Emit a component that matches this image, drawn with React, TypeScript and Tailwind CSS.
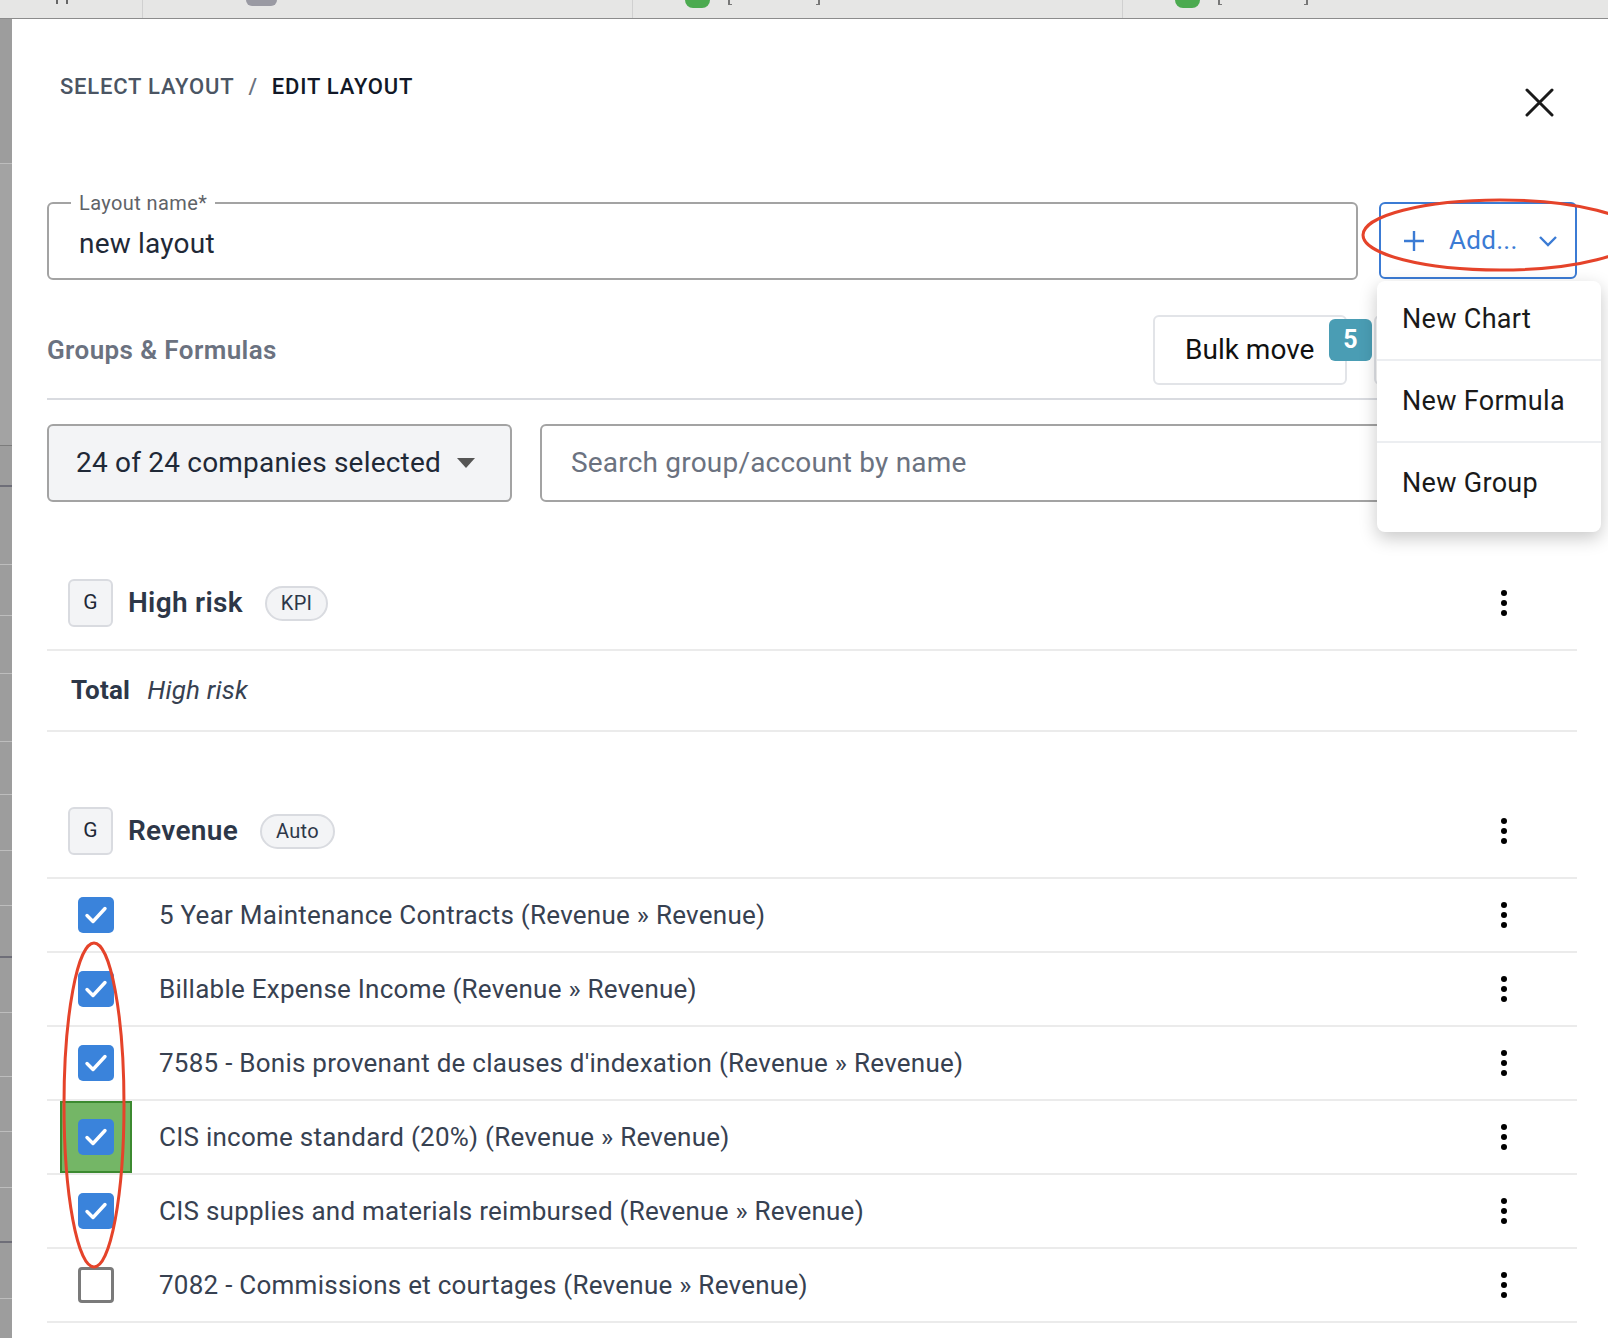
import React from "react"

const rows = [
  { label: "5 Year Maintenance Contracts (Revenue » Revenue)", checked: true },
  { label: "Billable Expense Income (Revenue » Revenue)", checked: true },
  { label: "7585 - Bonis provenant de clauses d'indexation (Revenue » Revenue)", checked: true },
  { label: "CIS income standard (20%) (Revenue » Revenue)", checked: true, highlight: true },
  { label: "CIS supplies and materials reimbursed (Revenue » Revenue)", checked: true },
  { label: "7082 - Commissions et courtages (Revenue » Revenue)", checked: false },
]

// left strip of the window behind the modal
const stripBands = [145, 282, 41, 78, 51, 58, 68, 53, 56, 55, 52, 55, 64, 55, 56, 55, 56]

const Kebab = () => (
  <div className="flex flex-col items-center gap-[4px]">
    <span className="w-[6px] h-[6px] rounded-full bg-black" />
    <span className="w-[6px] h-[6px] rounded-full bg-black" />
    <span className="w-[6px] h-[6px] rounded-full bg-black" />
  </div>
)

const Checkbox = ({ checked }: { checked: boolean }) =>
  checked ? (
    <div className="w-[36px] h-[36px] rounded-[5px] bg-[#3a83db] flex items-center justify-center">
      <svg width="26" height="26" viewBox="0 0 26 26" fill="none">
        <path d="M4 13.5 L10 19.5 L22 6.5" stroke="white" strokeWidth="3.4" strokeLinecap="round" strokeLinejoin="round" />
      </svg>
    </div>
  ) : (
    <div className="w-[36px] h-[36px] rounded-[4px] border-[3px] border-[#7a7a7a] bg-white" />
  )

const GroupHeader = ({ name, tag }: { name: string; tag: string }) => (
  <div className="flex items-center justify-between pb-[22px] border-b-2 border-[#ebebeb]">
    <div className="flex items-center">
      <div className="ml-[21px] w-[45px] h-[48px] rounded-[6px] border-2 border-[#d9dbe0] bg-[#f3f4f6] flex items-center justify-center text-[21px] text-[#1f2937]">
        G
      </div>
      <span className="ml-[15px] text-[28px] font-semibold tracking-[0.3px] text-[#2d3748] leading-none">{name}</span>
      <span className="ml-[22px] px-[14px] h-[35px] rounded-full border-2 border-[#d9dbe0] bg-[#f3f4f6] flex items-center text-[20px] tracking-[0.3px] text-[#2d3748]">
        {tag}
      </span>
    </div>
    <div className="mr-[70px]">
      <Kebab />
    </div>
  </div>
)

export default function App() {
  return (
    <div className="relative w-[1608px] h-[1338px] overflow-hidden bg-white font-['Roboto',sans-serif]">
      {/* top tab strip of the page behind */}
      <div className="h-[19px] bg-[#e6e6e5] border-b border-[#8c8c8c] flex items-start relative">
        <div className="w-[143px] h-full border-r border-[#d0d0d0] flex gap-[8px] pl-[56px]">
          <span className="w-[2px] h-[4px] bg-[#666]" />
          <span className="w-[2px] h-[4px] bg-[#666]" />
        </div>
        <div className="w-[490px] h-full border-r border-[#d0d0d0] pl-[103px]">
          <div className="w-[31px] h-[6px] rounded-b-[6px] bg-[#9a9aa3]" />
        </div>
        <div className="w-[490px] h-full border-r border-[#d0d0d0] pl-[52px] flex items-start">
          <div className="w-[25px] h-[8px] rounded-b-full bg-[#4caa50]" />
          <span className="ml-[18px] w-[4px] h-[5px] border-l-2 border-b border-[#777]" />
          <span className="ml-[84px] w-[4px] h-[5px] border-r-2 border-b border-[#777]" />
        </div>
        <div className="flex-1 h-full pl-[52px] flex items-start">
          <div className="w-[25px] h-[8px] rounded-b-full bg-[#4caa50]" />
          <span className="ml-[18px] w-[4px] h-[5px] border-l-2 border-b border-[#777]" />
          <span className="ml-[82px] w-[4px] h-[5px] border-r-2 border-b border-[#777]" />
        </div>
      </div>

      <div className="flex">
        <div className="w-[12px] h-[1319px] bg-[#9d9d9d] flex flex-col">
          {stripBands.map((h, i) => (
            <div
              key={i}
              style={{ height: h }}
              className={
                i === 1
                  ? "border-b border-[#7c7c7c] bg-[#a3a3a3]"
                  : i === 2 || i === 10 || i === 15
                  ? "border-b-2 border-[#6e6e78]"
                  : "border-b border-[#bdbdbd]"
              }
            />
          ))}
        </div>

        {/* modal */}
        <div className="flex-1 pl-[35px] pr-[31px]">
          <div className="h-[183px] flex justify-between items-start">
            <div className="ml-[13px] mt-[53px] leading-[30px] text-[22px] font-medium tracking-[0.8px] flex">
              <span className="text-[#4b5563]">SELECT LAYOUT</span>
              <span className="text-[#6b7280] mx-[14px]">/</span>
              <span className="text-[#111827]">EDIT LAYOUT</span>
            </div>
            <svg className="mt-[69px] mr-[23px]" width="29" height="29" viewBox="0 0 29 29">
              <path d="M2 2 L27 27 M27 2 L2 27" stroke="#1a1a1a" strokeWidth="3" strokeLinecap="round" />
            </svg>
          </div>

          {/* name + add */}
          <div className="flex gap-[21px] items-start">
            <div className="relative flex-1 h-[78px] rounded-[6px] border-2 border-[#a3a3a3] flex items-center pl-[30px]">
              <span className="absolute -top-[14px] left-[22px] px-[8px] bg-white text-[20px] tracking-[0.4px] leading-[26px] text-[#5f6368]">
                Layout name*
              </span>
              <span className="text-[28px] tracking-[0.2px] text-[#1f2937] mt-[6px]">new layout</span>
            </div>
            <div className="w-[198px] h-[77px] rounded-[6px] border-2 border-[#3b7bd4] flex items-center pl-[22px] text-[#3b7bd4]">
              <svg width="22" height="22" viewBox="0 0 22 22">
                <path d="M11 1 V21 M1 11 H21" stroke="#3b7bd4" strokeWidth="2.4" />
              </svg>
              <span className="ml-[24px] text-[26px] tracking-[0.3px]">Add...</span>
              <svg className="ml-[20px]" width="20" height="12" viewBox="0 0 20 12" fill="none">
                <path d="M2 2 L10 10 L18 2" stroke="#3b7bd4" strokeWidth="2.4" />
              </svg>
            </div>
          </div>

          {/* groups & formulas header */}
          <div className="mt-[35px] pb-[13px] border-b-2 border-[#d9dbe0] flex items-center justify-between">
            <span className="text-[26px] font-semibold tracking-[0.4px] text-[#6b7280]">Groups &amp; Formulas</span>
            <div className="flex gap-[27px]">
              <div className="relative w-[194px] h-[70px] rounded-[6px] border-2 border-[#e2e4e8] flex items-center pl-[30px]">
                <span className="text-[28px] text-[#111]">Bulk move</span>
                <span className="absolute top-[2px] left-[174px] w-[43px] h-[42px] rounded-[6px] bg-[#4a9db4] flex items-center justify-center text-[25px] font-bold text-white">
                  5
                </span>
              </div>
              <div className="w-[203px] h-[70px] rounded-[6px] border-2 border-[#e2e4e8]" />
            </div>
          </div>

          {/* filters */}
          <div className="mt-[24px] h-[78px] flex gap-[28px]">
            <div className="w-[465px] h-full rounded-[6px] border-2 border-[#a3a3a3] bg-[#f3f4f6] flex items-center pl-[27px]">
              <span className="text-[28px] tracking-[0.2px] text-[#1f2937]">24 of 24 companies selected</span>
              <svg className="ml-[16px]" width="18" height="10" viewBox="0 0 18 10">
                <path d="M0 0 H18 L9 10 Z" fill="#555" />
              </svg>
            </div>
            <div className="flex-1 h-full rounded-[6px] border-2 border-[#a3a3a3] flex items-center pl-[29px]">
              <span className="text-[28px] tracking-[0.2px] text-[#6b7280]">Search group/account by name</span>
            </div>
          </div>

          {/* High risk group */}
          <div className="mt-[77px]">
            <GroupHeader name="High risk" tag="KPI" />
            <div className="h-[81px] border-b-2 border-[#ebebeb] flex items-center pl-[24px]">
              <span className="text-[26px] font-bold tracking-[0.2px] text-[#2d3748]">Total</span>
              <span className="ml-[17px] text-[26px] italic tracking-[0.2px] text-[#374151]">High risk</span>
            </div>
          </div>

          {/* Revenue group */}
          <div className="pt-[75px]">
            <GroupHeader name="Revenue" tag="Auto" />
            {rows.map((row) => (
              <div key={row.label} className="h-[74px] border-b-2 border-[#ebebeb] flex items-center justify-between">
                <div className="flex items-center h-full">
                  <div
                    className={
                      row.highlight
                        ? "ml-[13px] w-[72px] h-full flex items-center justify-center bg-[#74b666] border-2 border-[#3c8a30]"
                        : "ml-[13px] w-[72px] h-full flex items-center justify-center"
                    }
                  >
                    <Checkbox checked={row.checked} />
                  </div>
                  <span className="ml-[27px] text-[26px] tracking-[0.25px] text-[#374151]">{row.label}</span>
                </div>
                <div className="mr-[70px]">
                  <Kebab />
                </div>
              </div>
            ))}
          </div>
        </div>
      </div>

      {/* Add dropdown menu */}
      <div className="absolute left-[1377px] top-[281px] w-[224px] rounded-[8px] bg-white shadow-[0_6px_18px_rgba(0,0,0,0.22)] flex flex-col text-[27px] tracking-[0.3px] text-[#1a1a1a]">
        <div className="h-[80px] flex items-center pl-[25px] pb-[2px] border-b-2 border-[#eceef1]">New Chart</div>
        <div className="h-[82px] flex items-center pl-[25px] border-b-2 border-[#eceef1]">New Formula</div>
        <div className="h-[89px] flex items-center pl-[25px] pb-[8px]">New Group</div>
      </div>

      {/* red annotation marks */}
      <svg className="absolute inset-0 pointer-events-none" width="1608" height="1338" viewBox="0 0 1608 1338" fill="none">
        <ellipse cx="1500" cy="235" rx="137" ry="35" stroke="#e5432a" strokeWidth="3" />
        <ellipse cx="94" cy="1105" rx="30" ry="162" stroke="#e5432a" strokeWidth="3" />
      </svg>
    </div>
  )
}
